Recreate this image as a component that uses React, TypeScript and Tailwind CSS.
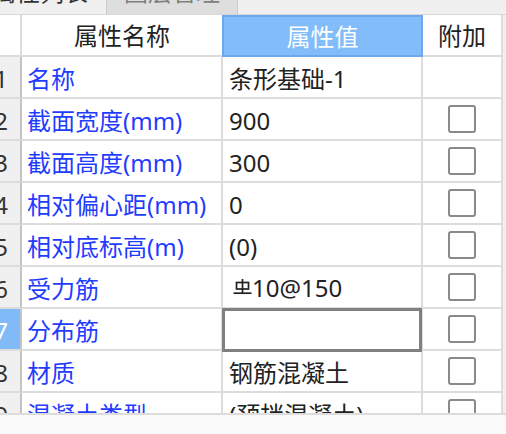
import React from "react";

type Row = {
  n: number;
  name: string;
  value: string;
  cb: boolean;
  rebar?: boolean;
  selected?: boolean;
};

const rows: Row[] = [
  { n: 1, name: "名称", value: "条形基础-1", cb: false },
  { n: 2, name: "截面宽度(mm)", value: "900", cb: true },
  { n: 3, name: "截面高度(mm)", value: "300", cb: true },
  { n: 4, name: "相对偏心距(mm)", value: "0", cb: true },
  { n: 5, name: "相对底标高(m)", value: "(0)", cb: true },
  { n: 6, name: "受力筋", value: "10@150", cb: true, rebar: true },
  { n: 7, name: "分布筋", value: "", cb: true, selected: true },
  { n: 8, name: "材质", value: "钢筋混凝土", cb: true },
  { n: 9, name: "混凝土类型", value: "(预拌混凝土)", cb: true },
];

function Rebar() {
  return (
    <svg width="19" height="16" viewBox="0 0 19 16" className="shrink-0 ml-[4px]">
      <rect x="3.5" y="3.5" width="12" height="6.5" fill="none" stroke="#222" strokeWidth="1.7" />
      <line x1="9.5" y1="0" x2="9.5" y2="14" stroke="#222" strokeWidth="1.7" />
      <line x1="0.5" y1="14.2" x2="18.5" y2="14.2" stroke="#222" strokeWidth="1.7" />
    </svg>
  );
}

export default function App() {
  return (
    <div className="w-[506px] h-[434px] bg-[#f0f0f0] overflow-hidden font-['Noto_Sans','Noto_Sans_CJK_SC',sans-serif] text-[24px]">
      {/* tab strip */}
      <div className="h-[15px] flex border-b border-[#d6d6d6] overflow-hidden">
        <div className="w-[107px] shrink-0 border-r border-[#c8c8c8] overflow-hidden">
          <div className="mt-[-20px] ml-[-8px] leading-[24px] whitespace-nowrap text-[#333]">属性列表</div>
        </div>
        <div className="w-[131px] shrink-0 bg-[#dedede] border-r border-[#c8c8c8] overflow-hidden flex justify-center">
          <div className="mt-[-20px] leading-[24px] whitespace-nowrap text-[#808080]">图层管理</div>
        </div>
      </div>

      {/* table */}
      <div className="h-[400px] border-b-2 border-[#dcdcdc] overflow-hidden">
        <div className="w-[503px] bg-white">
          {/* header */}
          <div className="flex h-[42px]">
            <div className="w-[22px] h-[42px] border-r-2 border-b-2 border-[#dcdcdc] bg-white" />
            <div className="w-[200px] h-[42px] border-b-2 border-[#dcdcdc] flex items-center justify-center leading-[40px] pt-[2px] text-[#222]">
              属性名称
            </div>
            <div className="w-[201px] h-[42px] border-2 border-[#6ea8ec] bg-[#82bcf9] flex items-center justify-center leading-[38px] pt-[2px] text-white">
              属性值
            </div>
            <div className="w-[80px] h-[42px] border-r-2 border-b-2 border-[#dcdcdc] flex items-center justify-center leading-[40px] pt-[2px] text-[#222]">
              附加
            </div>
          </div>

          {rows.map((r) => (
            <div key={r.n} className="flex h-[42px]">
              <div
                className={
                  r.selected
                    ? "w-[22px] h-[42px] border-r-2 border-r-[#c4c4c4] border-b-2 border-b-[#dcdcdc] bg-[#80bbf8] text-white overflow-hidden flex justify-end pr-[12px] leading-[40px] pt-[2px]"
                    : "w-[22px] h-[42px] border-r-2 border-r-[#c4c4c4] border-b-2 border-b-[#dcdcdc] bg-[#f0f0f0] text-[#333] overflow-hidden flex justify-end pr-[12px] leading-[40px] pt-[2px]"
                }
              >
                <span className="whitespace-nowrap shrink-0">{r.n}</span>
              </div>
              <div className="w-[201px] h-[42px] border-r-2 border-b-2 border-[#dcdcdc] pl-[5px] leading-[40px] pt-[2px] text-[#1f3cff] whitespace-nowrap overflow-hidden">
                {r.name}
              </div>
              <div className="relative w-[200px] h-[42px] border-r-2 border-b-2 border-[#dcdcdc] pl-[6px] leading-[40px] pt-[2px] text-[#222] whitespace-nowrap">
                {r.rebar ? (
                  <div className="flex items-center h-[40px] mt-[-2px]">
                    <Rebar />
                    <span className="leading-[40px] pt-[2px]">{r.value}</span>
                  </div>
                ) : (
                  r.value
                )}
                {r.selected && (
                  <div className="absolute left-[-1px] top-[-1px] w-[200px] h-[44px] border-[3px] border-[#808080] z-10" />
                )}
              </div>
              <div className="w-[80px] h-[42px] border-r-2 border-b-2 border-[#dcdcdc] flex items-center justify-center">
                {r.cb && (
                  <div className="w-[28px] h-[28px] border-2 border-[#8a8a8a] rounded-[3px] bg-white" />
                )}
              </div>
            </div>
          ))}
        </div>
      </div>

      <div className="h-[19px] bg-[#fafafa]" />
    </div>
  );
}
